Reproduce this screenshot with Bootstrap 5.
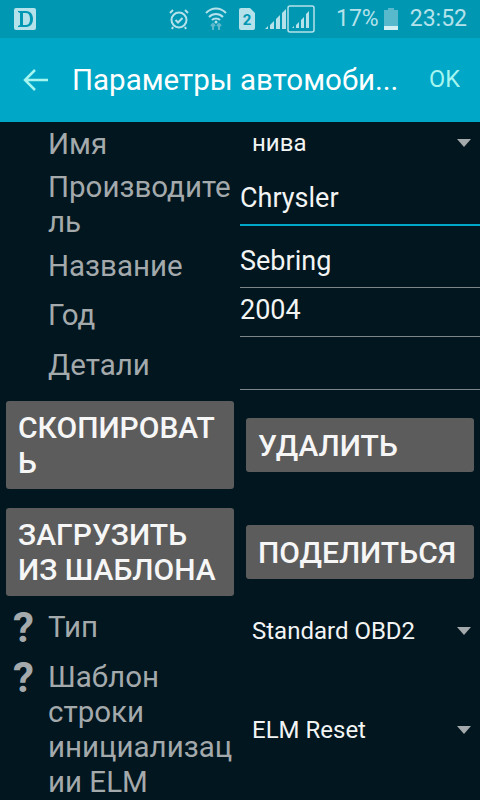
<!DOCTYPE html>
<html lang="ru">

<head>
    <meta charset="UTF-8">
    <title>Параметры автомобиля</title>
    <meta name="viewport" content="width=device-width, initial-scale=1">
    <link href="https://cdn.jsdelivr.net/npm/bootstrap@5.3.0/dist/css/bootstrap.min.css" rel="stylesheet">
    <style>
        html, body {
            height: 800px;
            overflow: hidden;
        }

        body {
            background: #01161e;
            font-family: Roboto, "Liberation Sans", sans-serif;
        }

        .status-strip {
            height: 38px;
            background: #0097b3;
            color: #b5e2ea;
            padding: 0 13px 0 14px;
        }

        .status-clock,
        .status-pct {
            font-size: 23px;
            line-height: 38px;
        }

        .status-pct {
            margin-left: 21px;
        }

        .status-clock {
            margin-left: 12px;
        }

        .gap-12 {
            margin-left: 12px;
        }

        .gap-10 {
            margin-left: 10px;
        }

        .gap-5 {
            margin-left: 5px;
        }

        .app-strip {
            height: 84px;
            background: #00a7c6;
            color: #fff;
        }

        .app-title {
            font-size: 29.5px;
            margin-left: 23px;
            width: 326px;
            white-space: nowrap;
        }

        .app-ok {
            font-size: 23.5px;
            color: #a5f5f0;
            margin-left: 31px;
        }

        .back-arrow {
            margin-left: 23px;
        }

        .form-line {
            display: flex;
        }

        .h-name {
            height: 48px;
        }

        .h-maker {
            height: 70px;
        }

        .h-model {
            height: 48px;
        }

        .h-year {
            height: 49px;
        }

        .h-details {
            height: 53px;
        }

        .h-type {
            height: 50px;
        }

        .field-name {
            width: 240px;
            flex: none;
            padding: 0 4px 0 48px;
            font-size: 29.5px;
            line-height: 35px;
            color: #a4a9ac;
            overflow-wrap: anywhere;
            position: relative;
        }

        .top-5 {
            padding-top: 5px;
        }

        .top-9 {
            padding-top: 9px;
        }

        .top-10 {
            padding-top: 10px;
        }

        .top-11 {
            padding-top: 11px;
        }

        .field-value {
            flex: 1;
            font-size: 27px;
            color: #f2f4f4;
            border-bottom: 1px solid #7d8589;
            line-height: 35px;
        }

        .val-top-4 {
            padding-top: 4px;
        }

        .val-top-5 {
            padding-top: 5px;
        }

        .field-value.active {
            height: 56px;
            padding-top: 11px;
            border-bottom: 2px solid #00a7c6;
        }

        .picker {
            flex: 1;
            display: flex;
            align-items: center;
            justify-content: space-between;
            padding: 0 9px 0 12px;
            font-size: 24px;
            color: #f2f4f4;
        }

        .picker-low {
            height: 42px;
        }

        .picker-caret {
            width: 0;
            height: 0;
            border-left: 7px solid transparent;
            border-right: 7px solid transparent;
            border-top: 8px solid #a4a9ac;
        }

        .help-mark {
            position: absolute;
            left: 13px;
            top: 0;
            font-size: 42px;
            font-weight: 700;
            color: #a4a9ac;
            line-height: 35px;
        }

        .grey-btn {
            background: #5c5c5c;
            color: #f6f6f6;
            font-size: 30px;
            font-weight: 500;
            line-height: 35px;
            border: 0;
            border-radius: 3px;
            padding: 0 12px;
            text-align: left;
            overflow-wrap: anywhere;
            width: 228px;
        }

        .btn-pair {
            display: flex;
            align-items: center;
            justify-content: space-between;
            height: 88px;
            padding: 0 6px;
        }

        .first-pair {
            margin-top: 11px;
        }

        .second-pair {
            margin-top: 19px;
        }

        .after-btns {
            margin-top: 14px;
        }

        .tall-btn {
            height: 88px;
        }

        .short-btn {
            height: 54px;
        }
    </style>
</head>

<body>

    <!-- Status bar -->
    <div class="status-strip d-flex align-items-center">
        <svg width="22" height="22" viewBox="0 0 22 22">
            <rect width="22" height="22" rx="2" fill="#b5e2ea" />
            <path d="M4 3h8c5 0 7 4 7 8s-2 8-7 8H4v-1l2-1V5L4 4zM9 5v12h3c3 0 4-3 4-6s-1-6-4-6z" fill="#0097b3" />
        </svg>
        <svg class="ms-auto" width="20" height="22" viewBox="0 0 20 22" fill="none" stroke="#b5e2ea" stroke-width="2">
            <circle cx="10" cy="12" r="7.5" />
            <path d="M6.5 12l2.5 2.5 4.5-4.5M1 5l3-3M19 5l-3-3M4 19l-1 2M16 19l1 2" />
        </svg>
        <svg class="ms-3" width="22" height="24" viewBox="0 0 22 24" fill="none" stroke="#b5e2ea" stroke-width="2">
            <path d="M1 6c6-6 14-6 20 0M4 10c4-4 10-4 14 0M7 13c2-2 6-2 8 0" />
            <circle cx="11" cy="15" r="1.5" fill="#b5e2ea" stroke="none" />
            <path d="M8 17v6M14 17v6M6 19l2-2 2 2M12 19l2-2 2 2" stroke="#5fb9cb" />
        </svg>
        <svg class="gap-12" width="16" height="22" viewBox="0 0 16 22">
            <path d="M0 2q0-2 2-2h9l5 5v15q0 2-2 2H2q-2 0-2-2z" fill="#b5e2ea" />
            <text x="8" y="17" text-anchor="middle" font-size="15" font-weight="700" fill="#0097b3" font-family="Roboto">2</text>
        </svg>
        <svg class="gap-10" width="22" height="22" viewBox="0 0 22 22" fill="#b5e2ea">
            <path d="M0 21h3v-3l-3 3zM5 21h4v-8l-4 4zM11 21h4V7l-4 4zM17 21h4V1l-4 4z" />
        </svg>
        <svg width="28" height="28" viewBox="0 0 28 28" fill="#b5e2ea">
            <rect x="1" y="1" width="26" height="26" rx="2" fill="none" stroke="#b5e2ea" stroke-width="1.5" />
            <path d="M5 23h2v-2zM9 23h3v-6l-3 3zM14 23h3V12l-3 3zM19 23h3V6l-3 3z" />
        </svg>
        <span class="status-pct">17%</span>
        <svg class="gap-5" width="14" height="22" viewBox="0 0 14 22">
            <path d="M4 0h6v2h4v20H0V2h4z" fill="#58b8cc" />
            <rect y="18" width="14" height="4" fill="#d2eff4" />
        </svg>
        <span class="status-clock">23:52</span>
    </div>

    <!-- App bar -->
    <div class="app-strip d-flex align-items-center">
        <svg class="back-arrow" width="26" height="24" viewBox="0 0 26 24" fill="none" stroke="#a5f5f0" stroke-width="2.5">
            <path d="M25 12H2M12 2L2 12l10 10" />
        </svg>
        <div class="app-title">Параметры автомоби...</div>
        <div class="app-ok">OK</div>
    </div>

    <!-- Form -->
    <div class="form-line h-name">
        <div class="field-name top-5">Имя</div>
        <div class="picker picker-low"><span>нива</span><span class="picker-caret"></span></div>
    </div>
    <div class="form-line h-maker">
        <div class="field-name">Производитель</div>
        <div class="field-value active">Chrysler</div>
    </div>
    <div class="form-line h-model">
        <div class="field-name top-9">Название</div>
        <div class="field-value val-top-4">Sebring</div>
    </div>
    <div class="form-line h-year">
        <div class="field-name top-10">Год</div>
        <div class="field-value val-top-5">2004</div>
    </div>
    <div class="form-line h-details">
        <div class="field-name top-11">Детали</div>
        <div class="field-value"></div>
    </div>

    <div class="btn-pair first-pair">
        <button class="grey-btn tall-btn">СКОПИРОВАТЬ</button>
        <button class="grey-btn short-btn">УДАЛИТЬ</button>
    </div>
    <div class="btn-pair second-pair">
        <button class="grey-btn tall-btn">ЗАГРУЗИТЬ ИЗ ШАБЛОНА</button>
        <button class="grey-btn short-btn">ПОДЕЛИТЬСЯ</button>
    </div>

    <div class="form-line after-btns h-type">
        <div class="field-name"><span class="help-mark">?</span>Тип</div>
        <div class="picker picker-low"><span>Standard OBD2</span><span class="picker-caret"></span></div>
    </div>
    <div class="form-line">
        <div class="field-name"><span class="help-mark">?</span>Шаблон строки инициализации ELM</div>
        <div class="picker"><span>ELM Reset</span><span class="picker-caret"></span></div>
    </div>

    <script src="https://cdn.jsdelivr.net/npm/bootstrap@5.3.0/dist/js/bootstrap.bundle.min.js"></script>
</body>

</html>
